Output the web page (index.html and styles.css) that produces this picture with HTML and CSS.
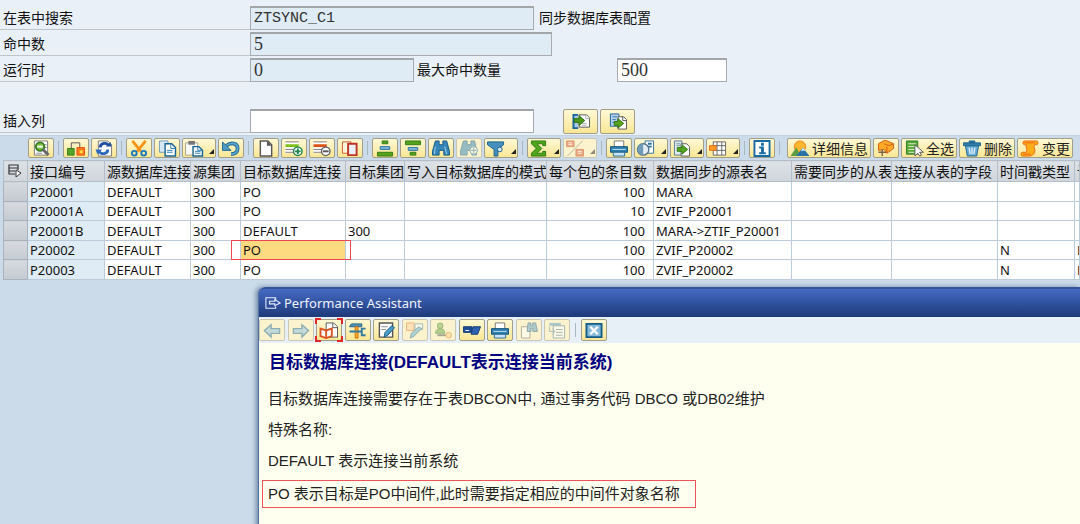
FILE: index.html
```
<!DOCTYPE html>
<html lang="zh-CN">
<head>
<meta charset="utf-8">
<title>同步数据库表配置</title>
<link rel="stylesheet" href="styles.css">
</head>
<body>
<main class="screen">
<form class="search">
  <div class="row"><label class="name" for="tab">在表中搜索</label><input class="field long" id="tab" value="ZTSYNC_C1" readonly><span class="note">同步数据库表配置</span></div>
  <div class="row"><label class="name" for="hits">命中数</label><input class="field digits longer" id="hits" value="5" readonly></div>
  <div class="row"><label class="name" for="run">运行时</label><input class="field digits short" id="run" value="0" readonly><label class="max" for="max">最大命中数量</label><input class="field digits number" id="max" value="500"></div>
  <div class="row insert"><label class="name" for="col">插入列</label><input class="field long" id="col" value="">
    <div class="insert-actions">
      <button type="button" class="btn big" aria-label="插入"><svg viewBox="0 0 20 18"><path d="M7 2H2v14h5" fill="#a9c9e6" stroke="#17659b" stroke-width="2"/><path d="M8 2h8l3 3v10H8z" fill="#fff" stroke="#555"/><path d="M15 2v4h4M11 11h5M11 13h5" fill="none" stroke="#aaa"/><path d="M3 6h5V3l6 5-6 5v-3H3z" fill="#4c9a1c" stroke="#2d7010"/></svg></button>
      <button type="button" class="btn big" aria-label="追加"><svg viewBox="0 0 20 18"><path d="M2 1h9v13H2z" fill="#b5d2ed" stroke="#1c6298"/><path d="M4 4h5M4 7h4M4 10h3" stroke="#3978ad"/><path d="M10 4h6l3 3v10h-9z" fill="#fff" stroke="#555"/><path d="M15 4v4h4" fill="none" stroke="#555"/><path d="M6 9h4V6l6 5-6 5v-3H6z" fill="#5aa51e" stroke="#2d7010"/></svg></button>
    </div>
  </div>
</form>

<div class="toolbar" role="toolbar" aria-label="表格工具栏">
  <button class="btn" aria-label="明细"><svg viewBox="0 0 20 18"><path d="M3 1h14v15H3z" fill="#fff" stroke="#777"/><path d="M12 5h4M12 8h4M5 14h6" stroke="#888"/><circle cx="9" cy="7" r="4.500" fill="#79c044" stroke="#397b24" stroke-width="2"/><path d="M6 7h6" stroke="#fff" stroke-width="2"/><path d="M12 10l6 6" stroke="#666" stroke-width="3"/></svg></button>
  <span class="sep"></span>
  <button class="btn" aria-label="检查"><svg viewBox="0 0 20 18"><path d="M5 9V3h9v6" fill="none" stroke="#555"/><path d="M1 9h7v7H1z" fill="#55a52a" stroke="#347b18"/><path d="M11 8h8v8h-8z" fill="#ff7b1b" stroke="#e34e12"/><path d="M14 11h3v3h-3z" fill="#ffe145"/></svg></button>
  <button class="btn" aria-label="刷新"><svg viewBox="0 0 20 18"><path d="M4 1h10l4 4v12H4z" fill="#fff" stroke="#777"/><path d="M6 8c0-5 7-6 9-2" fill="none" stroke="#214f9d" stroke-width="3"/><path d="M12 7h6l-1-5z" fill="#214f9d"/><path d="M14 10c0 5-7 6-9 2" fill="none" stroke="#2d6abb" stroke-width="3"/><path d="M8 10H1l2 5z" fill="#2d6abb"/></svg></button>
  <span class="sep"></span>
  <button class="btn" aria-label="剪切"><svg viewBox="0 0 20 18"><path d="M3 1l9 11M17 1L8 12" stroke="#f59419" stroke-width="3"/><circle cx="5" cy="14" r="2.500" fill="none" stroke="#1979b8" stroke-width="2"/><circle cx="15" cy="14" r="2.500" fill="none" stroke="#1979b8" stroke-width="2"/></svg></button>
  <button class="btn" aria-label="复制"><svg viewBox="0 0 20 18"><path d="M2 1h9v12H2z" fill="#d8e8f3" stroke="#6c9cbe"/><path d="M8 4h7l4 4v9H8z" fill="#fff" stroke="#196491" stroke-width="1.500"/><path d="M14 4v5h5M10 11h6M10 13h6" fill="none" stroke="#277cb0"/></svg></button>
  <button class="btn wide" aria-label="粘贴"><svg viewBox="0 0 20 18"><path d="M1 3h13v13H1z" fill="#f8f8f4" stroke="#a9a48a"/><path d="M4 1h7v4H4z" fill="#777"/><path d="M9 7h6l4 4v6H9z" fill="#fff" stroke="#196491" stroke-width="1.500"/><path d="M11 12h6M11 14h6M14 7v4h4" fill="none" stroke="#277cb0"/></svg><i></i></button>
  <button class="btn" aria-label="撤消"><svg viewBox="0 0 20 18"><path d="M5 6c5-4 12-3 12 3 0 4-3 6-7 6" fill="none" stroke="#20668e" stroke-width="4"/><path d="M5 6c5-4 12-3 12 3 0 4-3 6-7 6" fill="none" stroke="#5ba5ce" stroke-width="2"/><path d="M1 2v9h9z" fill="#4d9bc8" stroke="#20668e"/></svg></button>
  <span class="sep"></span>
  <button class="btn" aria-label="新建"><svg viewBox="0 0 20 18"><path d="M4 1h8l4 4v12H4z" fill="#fff" stroke="#555" stroke-width="1.500"/><path d="M11 1v5h5z" fill="#555"/></svg></button>
  <button class="btn" aria-label="插入行"><svg viewBox="0 0 20 18"><path d="M1 2h14v12H1z" fill="#fff"/><path d="M1 2h14M1 10h10M1 13h9" stroke="#777"/><path d="M1 6h14" stroke="#7dc01b" stroke-width="3"/><circle cx="14" cy="12" r="4.500" fill="#fff" stroke="#21854e" stroke-width="1.500"/><path d="M11 12h6M14 9v6" stroke="#21854e" stroke-width="2"/></svg></button>
  <button class="btn" aria-label="删除行"><svg viewBox="0 0 20 18"><path d="M1 2h14v12H1z" fill="#fff"/><path d="M1 2h14M1 10h10M1 13h9" stroke="#777"/><path d="M1 6h14" stroke="#db5416" stroke-width="3"/><circle cx="14" cy="12" r="4.500" fill="#fff" stroke="#666" stroke-width="1.500"/><path d="M11 12h6" stroke="#555" stroke-width="2"/></svg></button>
  <button class="btn" aria-label="复制行"><svg viewBox="0 0 20 18"><path d="M2 2h9v12H2z" fill="#fff7da" stroke="#d3552d"/><path d="M8 4h9v12H8z" fill="#e9eff3" stroke="#bd3427" stroke-width="2"/></svg></button>
  <span class="sep"></span>
  <button class="btn" aria-label="升序"><svg viewBox="0 0 20 18"><path d="M7 1h6v3H7zM2 13h16v4H2z" fill="#56a21f" stroke="#2e7b13"/><path d="M5 7h10v3H5z" fill="#80b9dc" stroke="#256f9c"/></svg></button>
  <button class="btn" aria-label="降序"><svg viewBox="0 0 20 18"><path d="M2 1h16v4H2zM7 13h6v3H7z" fill="#56a21f" stroke="#2e7b13"/><path d="M5 8h10v3H5z" fill="#80b9dc" stroke="#256f9c"/></svg></button>
  <button class="btn" aria-label="查找"><svg viewBox="0 0 20 18"><path d="M4 1h4v4h4V1h4l3 11v4h-6v-5H8v5H1v-4z" fill="#3786b9" stroke="#125987"/><path d="M4 7l-1 8M14 7l2 8" stroke="#a6d3ed"/></svg></button>
  <button class="btn off" aria-label="查找下一个" disabled><svg viewBox="0 0 20 18"><path d="M4 1h4v4h4V1h4l2 11v4h-5v-5H8v5H1v-4z" fill="#3786b9" stroke="#125987"/><circle cx="15" cy="11" r="4" fill="#fff" stroke="#246994"/><path d="M12 11h6M15 8v6" stroke="#246994"/></svg></button>
  <button class="btn wide" aria-label="筛选"><svg viewBox="0 0 20 18"><path d="M1 2h17v3l-6 5v7H8v-7L1 5z" fill="#4690be" stroke="#165f8d"/><circle cx="14" cy="10" r="2.500" fill="#d4e9f5" stroke="#165f8d"/></svg><i></i></button>
  <span class="sep"></span>
  <button class="btn wide" aria-label="总计"><svg viewBox="0 0 20 18"><path d="M2 1h15v5h-3V4H8l5 5-5 5h6v-2h3v5H2v-3l5-5-5-5z" fill="#50a51b" stroke="#2b7910"/></svg><i></i></button>
  <button class="btn wide off" aria-label="小计" disabled><svg viewBox="0 0 20 18"><path d="M1 1h8v6H1zM11 10h8v7h-8z" fill="#d95a34" stroke="#c33d1e"/><path d="M18 1L2 17" stroke="#777"/><path d="M3 3h4M3 5h4M13 12h4M13 14h4" stroke="#fff"/></svg><i></i></button>
  <span class="sep"></span>
  <button class="btn" aria-label="打印"><svg viewBox="0 0 20 18"><path d="M5 1h10v7H5z" fill="#fff" stroke="#777"/><path d="M1 7h18v6H1z" fill="#317fb0" stroke="#165579"/><path d="M3 10h14" stroke="#bde1f3"/><path d="M4 13h12v4H4z" fill="#c7e5f7" stroke="#286b95"/></svg></button>
  <button class="btn wide" aria-label="视图"><svg viewBox="0 0 20 18"><path d="M9 1h9v13H9z" fill="#fff" stroke="#2b719b"/><path d="M12 4h4M12 7h4" stroke="#2b719b" stroke-width="2"/><circle cx="7" cy="10" r="6" fill="#e4eef4" stroke="#54738a" stroke-width="1.500"/><path d="M7 4a6 6 0 000 12z" fill="#6f9ab8"/></svg><i></i></button>
  <button class="btn wide" aria-label="导出"><svg viewBox="0 0 20 18"><path d="M2 1h8v15H2z" fill="#dce9ee" stroke="#557a8f"/><path d="M9 4h6l3 3v10H9z" fill="#fff" stroke="#555"/><path d="M4 4h4M4 6h4" stroke="#7896a8"/><path d="M5 8h5V5l6 5-6 5v-3H5z" fill="#55a520" stroke="#2e7913"/></svg><i></i></button>
  <button class="btn wide" aria-label="布局"><svg viewBox="0 0 20 18"><path d="M5 2h13v14H5z" fill="#fff" stroke="#666"/><path d="M9 2v14M14 2v14M5 6h13M5 11h13" stroke="#666"/><path d="M1 6h7v5H1z" fill="#ff9c27" stroke="#e26c17"/></svg><i></i></button>
  <span class="sep"></span>
  <button class="btn" aria-label="信息"><svg viewBox="0 0 20 18"><path d="M2 1h16v16H2z" fill="#fff" stroke="#176da3" stroke-width="2"/><path d="M9 3h3v3H9zM7 7h5v6h2v2H7v-2h2V9H7z" fill="#176da3"/></svg></button>
  <span class="sep"></span>
  <div class="text-actions">
    <button class="btn text"><svg viewBox="0 0 20 18"><circle cx="10" cy="7" r="6" fill="#ffb62e" stroke="#ee831d"/><path d="M0 17l6-9 5 9z" fill="#5c9c42"/><path d="M6 17l7-9 7 9z" fill="#2872a5"/><path d="M11 12l2-4 3 4-2-1z" fill="#d7edf8"/></svg>详细信息</button>
    <button class="btn" aria-label="标记"><svg viewBox="0 0 20 18"><path d="M2 4l7-4 9 4v5l-7 5-3-4-6 1z" fill="#ffa928" stroke="#cf5c14"/><path d="M8 4l5 2 5-2M11 14V7" fill="none" stroke="#cf5c14"/><path d="M2 13h8M6 10v7" stroke="#7b6546" stroke-width="1.500"/></svg></button>
    <button class="btn text"><svg viewBox="0 0 20 18"><path d="M2 1h12v14H2z" fill="#55a735" stroke="#317d25"/><path d="M4 4h8M4 7h8M4 10h8M4 13h8" stroke="#e3f2d4"/><path d="M11 5v12l3-3 2 3 2-1-2-3h4z" fill="#fff" stroke="#555"/></svg>全选</button>
    <button class="btn text"><svg viewBox="0 0 20 18"><path d="M3 6h14l-2 11H5z" fill="#62a8d1" stroke="#1d668f"/><path d="M1 3h18v3H1zM7 1h6v2H7z" fill="#327ead" stroke="#1d668f"/><path d="M7 8l1 7M10 8v7M13 8l-1 7" stroke="#dceffa" stroke-width="1.500"/></svg>删除</button>
    <button class="btn text"><svg viewBox="0 0 20 18"><path d="M4 1h13c2 0 2 4 0 4h-2c-2 2 1 5 0 8-1 3-4 4-6 4H2c-2 0-2-4 0-4h4c2-2-1-5 0-8H4c-2 0-2-4 0-4z" fill="#ffae18" stroke="#e96614"/><path d="M4 3h11M3 15h8" stroke="#f05c19"/></svg>变更</button>
  </div>
</div>

<div class="grid">
<table>
<colgroup><col class="c-sel"><col class="c-id"><col class="c-src"><col class="c-grp"><col class="c-dst"><col class="c-dgrp"><col class="c-mode"><col class="c-pack"><col class="c-tab"><col class="c-sub"><col class="c-link"><col class="c-time"><col></colgroup>
<thead><tr><th aria-label="选择"><svg class="pick" viewBox="0 0 16 14"><path d="M2 1h9v3H2zM2 4v6h6M2 7h6M11 4v2" fill="none" stroke="#333" stroke-width="1.200"/><path d="M9 6v7l5-4z" fill="#fff" stroke="#333"/></svg></th><th>接口编号</th><th>源数据库连接</th><th>源集团</th><th>目标数据库连接</th><th>目标集团</th><th>写入目标数据库的模式</th><th>每个包的条目数</th><th>数据同步的源表名</th><th>需要同步的从表</th><th>连接从表的字段</th><th>时间戳类型</th><th>读</th></tr></thead>
<tbody>
<tr><th></th><td>P20001</td><td>DEFAULT</td><td>300</td><td>PO</td><td></td><td></td><td class="num">100</td><td>MARA</td><td></td><td></td><td></td><td></td></tr>
<tr><th></th><td>P20001A</td><td>DEFAULT</td><td>300</td><td>PO</td><td></td><td></td><td class="num">10</td><td>ZVIF_P20001</td><td></td><td></td><td></td><td></td></tr>
<tr><th></th><td>P20001B</td><td>DEFAULT</td><td>300</td><td>DEFAULT</td><td>300</td><td></td><td class="num">100</td><td>MARA-&gt;ZTIF_P20001</td><td></td><td></td><td></td><td></td></tr>
<tr><th></th><td>P20002</td><td>DEFAULT</td><td>300</td><td class="current">PO<span class="mark"></span></td><td></td><td></td><td class="num">100</td><td>ZVIF_P20002</td><td></td><td></td><td>N</td><td>L</td></tr>
<tr><th></th><td>P20003</td><td>DEFAULT</td><td>300</td><td>PO</td><td></td><td></td><td class="num">100</td><td>ZVIF_P20002</td><td></td><td></td><td>N</td><td>L</td></tr>
</tbody>
</table>
</div>

<section class="assistant" aria-labelledby="pa">
  <header class="titlebar"><svg viewBox="0 0 18 14"><path d="M12 3V1H1v12h11v-2M5 5h6V3l6 4-6 3V8H5z" fill="none" stroke="#e5edff" stroke-width="1.200"/></svg><h1 id="pa">Performance Assistant</h1></header>
  <div class="tools">
    <div class="tool-set">
    <button class="btn off" aria-label="后退"><svg viewBox="0 0 20 18"><path d="M2 9l7-6v4h9v5H9v4z" fill="#8fc5e6" stroke="#266c98" stroke-width="1.500"/></svg></button>
    <button class="btn off" aria-label="前进"><svg viewBox="0 0 20 18"><path d="M18 9l-7-6v4H2v5h9v4z" fill="#8fc5e6" stroke="#266c98" stroke-width="1.500"/></svg></button>
    <button class="btn focus" aria-label="应用帮助"><svg viewBox="0 0 20 18"><path d="M7 1h8l4 4v11H7z" fill="#fff" stroke="#555"/><path d="M14 1v5h5" fill="none" stroke="#555"/><path d="M1 7l6 2 6-2v8l-6 2-6-2z" fill="#fff" stroke="#db5423" stroke-width="2"/><path d="M7 9v8" stroke="#db5423" stroke-width="2"/></svg><svg class="corners" viewBox="0 0 28 24"><path d="M1 6V1h5M22 1h5v5M27 18v5h-5M6 23H1v-5" fill="none" stroke="#e02828" stroke-width="2"/></svg></button>
    <button class="btn" aria-label="定制"><svg viewBox="0 0 20 18"><path d="M3 2h11v3H1z" fill="#4f95bd" stroke="#205f84"/><path d="M7 5h3v12H7z" fill="#ffac20" stroke="#cb6c13"/><path d="M1 10h13M18 7h-4v7h4" fill="none" stroke="#347aa1" stroke-width="2"/></svg></button>
    <button class="btn" aria-label="编辑"><svg viewBox="0 0 20 18"><path d="M3 1h14v15H3z" fill="#fff" stroke="#555" stroke-width="1.500"/><path d="M5 5h7M5 8h5" stroke="#888"/><path d="M16 4l3 2-7 8-4 2 1-5z" fill="#4c99c5" stroke="#155e89"/></svg></button>
    <button class="btn off" aria-label="注释"><svg viewBox="0 0 20 18"><path d="M1 1h8v8H1z" fill="#ffd29c" stroke="#e27635"/><path d="M10 2h8v6h-8z" fill="#fff" stroke="#4682aa"/><path d="M14 5l3 2-8 8-4 2 1-5z" fill="#69add5" stroke="#286c96"/></svg></button>
    <button class="btn off" aria-label="技术信息"><svg viewBox="0 0 20 18"><circle cx="7" cy="4" r="3" fill="#7bb553" stroke="#397e28"/><path d="M2 12c0-7 10-7 10 0z" fill="#6ba84b" stroke="#397e28"/><path d="M4 14h10" stroke="#555" stroke-width="2"/><circle cx="16" cy="14" r="3" fill="#ffd28a" stroke="#d97927"/></svg></button>
    <button class="btn" aria-label="注记"><svg viewBox="0 0 20 18"><path d="M1 5h9v6H1z" fill="#214d94" stroke="#173c77"/><path d="M3 9h4" stroke="#fff"/><path d="M11 5h8l-3 8H9z" fill="#2f62ae" stroke="#173c77"/></svg></button>
    <button class="btn" aria-label="打印帮助"><svg viewBox="0 0 20 18"><path d="M5 1h10v7H5z" fill="#fff" stroke="#777"/><path d="M1 7h18v6H1z" fill="#317fb0" stroke="#165579"/><path d="M3 10h14" stroke="#bde1f3"/><path d="M4 13h12v4H4z" fill="#c7e5f7" stroke="#286b95"/></svg></button>
    <button class="btn off" aria-label="搜索帮助"><svg viewBox="0 0 20 18"><path d="M2 5h9v12H2z" fill="#fff" stroke="#666"/><path d="M9 1h3v3h2V1h3l2 9h-5V7h-2v3H8z" fill="#65a3ca" stroke="#225f88"/></svg></button>
    <button class="btn off" aria-label="目录"><svg viewBox="0 0 20 18"><path d="M2 1h12v3H2z" fill="#5b9ac4"/><path d="M6 4h12v13H6z" fill="#fff" stroke="#4d7894"/><path d="M9 8h7M9 11h7M9 14h7" stroke="#4d7894"/><path d="M2 5v5h5M5 7l3 3-3 3" fill="none" stroke="#5b8ba9"/></svg></button>
    </div>
    <span class="sep"></span>
    <button class="btn" aria-label="关闭"><svg viewBox="0 0 20 18"><path d="M2 2h16v14H2z" fill="#86bad9" stroke="#155c86" stroke-width="2"/><path d="M6 5l8 8M14 5l-8 8" stroke="#fff" stroke-width="2.500"/></svg></button>
  </div>
  <article class="help">
    <h2>目标数据库连接(DEFAULT表示连接当前系统)</h2>
    <p>目标数据库连接需要存在于表DBCON中, 通过事务代码 DBCO 或DB02维护</p>
    <p>特殊名称:</p>
    <p>DEFAULT 表示连接当前系统</p>
    <p class="boxed">PO 表示目标是PO中间件,此时需要指定相应的中间件对象名称</p>
  </article>
</section>
</main>
</body>
</html>
```
FILE: styles.css
```
* { box-sizing: border-box; }
body { margin: 0; background: #cbdbe9; color: #111; font: 14px/20px "Noto Sans", "Noto Sans CJK SC", sans-serif; }
.screen { display: flex; flex-direction: column; min-height: 100vh; overflow: hidden; }

.search { display: flex; flex-direction: column; gap: 2px; padding: 6px 0 2px; background: #e9f0f7; font-family: "Noto Sans CJK SC", sans-serif; }
.row { display: flex; height: 24px; white-space: nowrap; }
.insert { margin-top: 25px; }
.name { width: 250px; padding: 1px 3px; border-bottom: 1px solid #c0c5c9; }
.note { padding: 1px 5px; }
.max { width: 203px; padding: 1px 3px; }
.field { height: 24px; padding: 0 3px; border: 1px solid #a8acb0; border-top: 2px solid #a3a6a9; border-radius: 0; background: #fff; color: #333; font: 15px "Liberation Mono", monospace; }
.field[readonly] { background: #dfebf5; }
.digits { font: 18px "Liberation Serif", serif; }
.long { width: 284px; }
.longer { width: 302px; }
.short { width: 164px; }
.number { width: 110px; }
.insert-actions { display: flex; gap: 2px; margin-left: 29px; }

.btn { display: flex; flex: none; align-items: center; justify-content: center; width: 26px; height: 20px; padding: 0; border: 1px solid #a39e88; border-radius: 2px; background: linear-gradient(#fff8d6, #f9e795); color: #222; font: 14px/18px "Noto Sans CJK SC", sans-serif; white-space: nowrap; position: relative; }
.btn svg { flex: none; width: 20px; height: 17px; }
.btn.big { width: 35px; height: 25px; }
.btn.wide { width: 34px; padding-left: 1px; justify-content: flex-start; }
.btn.wide i { align-self: flex-end; margin: 0 0 3px 5px; border-left: 5px solid transparent; border-bottom: 5px solid #222; }
.btn.text { width: auto; padding: 0 2px; gap: 2px; }
.btn.off { border-color: #c9c6b8; background: #faf3cd; }
.btn.off svg, .btn.off i { opacity: .5; }
.btn .corners { position: absolute; inset: -2px; width: 28px; height: 24px; }
.sep { flex: none; width: 5px; height: 14px; border: solid transparent; border-width: 0 2px; background: #a9b7c4 content-box; }

.toolbar { display: flex; align-items: center; gap: 2px; height: 25px; padding-left: 28px; border-top: 1px solid #c3d2e0; }
.text-actions { display: flex; gap: 2px; padding-left: 3px; }

.grid { margin-left: 3px; overflow: hidden; }
table { width: 100%; border-collapse: collapse; table-layout: fixed; background: #fff; }
.c-sel { width: 24px; } .c-id { width: 77px; } .c-src { width: 86px; } .c-grp { width: 50px; }
.c-dst { width: 105px; } .c-dgrp { width: 59px; } .c-mode { width: 142px; } .c-pack { width: 107px; }
.c-tab { width: 138px; } .c-sub { width: 100px; } .c-link { width: 106px; } .c-time { width: 77px; }
th, td { padding: 0 0 0 2px; border: 1px solid #bccbd9; font-weight: 400; text-align: left; white-space: nowrap; }
td { height: 19px; font-size: 13px; line-height: 18px; }
tbody tr:nth-child(odd) td { height: 20px; }
thead th { height: 21px; overflow: hidden; border-color: #b3bec9; background: linear-gradient(#dde2e7, #cfd5db); font: 14px/20px "Noto Sans CJK SC", sans-serif; }
tbody th { background: linear-gradient(#d7dbe0, #c4cad1); border-color: #aab3bd; }
td:nth-child(2) { background: #dfebf5; }
th:last-child, td:last-child { overflow: hidden; }
.num { padding-right: 8px; text-align: right; }
.current { position: relative; background: #fdda80; }
.mark { position: absolute; inset: -1px -6px -1px -10px; border: 1px solid #ec4650; }
.pick { display: block; width: 16px; height: 14px; margin-left: 1px; }

.assistant { display: flex; flex: 1; flex-direction: column; margin: 7px 0 0 258px; border-left: 1px solid #53709f; border-radius: 6px 0 0 0; background: #feffee; box-shadow: -2px 0 5px #6d87a5; }
.titlebar { display: flex; align-items: center; gap: 3px; height: 30px; padding-left: 6px; border-top: 2px solid #35549a; border-radius: 6px 0 0 0; background: linear-gradient(#456bc4, #1d3978); color: #eef2ff; }
.titlebar svg { width: 16px; height: 14px; }
h1 { margin: 0; font-size: 13px; font-weight: 400; }
.tools { display: flex; align-items: center; gap: 2px; height: 26px; background: #e8f0f7; }
.tools .btn { height: 22px; }
.tools .sep { margin: 0 1px; }
.tool-set { display: flex; justify-content: space-between; width: 311px; }
.help { padding: 8px 3px 16px; color: #222; font: 15px/24px "Liberation Sans", "Noto Sans CJK SC", sans-serif; }
h2 { margin: 0 0 12px; padding: 0 7px; color: #000080; font-size: 17px; line-height: 24px; font-weight: 700; }
.help p { margin: 0 0 7px; padding: 0 6px; }
.help .boxed { width: fit-content; min-width: 434px; padding: 1px 5px; border: 1px solid #f0525a; }
```
